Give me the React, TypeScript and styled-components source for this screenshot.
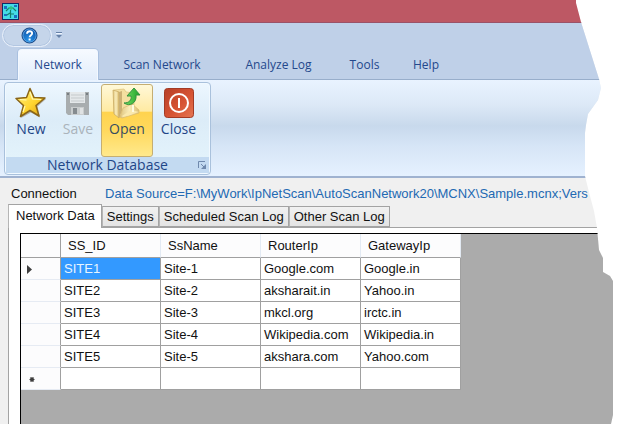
import React, { useState } from "react";
import styled, { createGlobalStyle, css } from "styled-components";

const GlobalStyle = createGlobalStyle`
  * { box-sizing: border-box; }
  html, body, #root { height: 100%; }
  body { margin: 0; background: #fff; overflow: hidden; }
  button { font: inherit; color: inherit; margin: 0; padding: 0; border: 0; background: none; }
`;

/* The right side of the window ends in a ragged, torn-paper edge. */
const tornEdge: Array<[number, number]> = [
  [60, 0], [60, 3], [55, 22], [37, 79], [35, 88], [38, 100], [48, 114],
  [50, 125], [51, 133], [51, 176], [46, 196], [42, 211], [39, 228],
  [37, 250], [33, 258], [33, 272], [26, 276], [23, 281], [23, 415], [25, 424],
];
const tornPolygon = tornEdge
  .map(([right, y]) => `calc(100% - ${right}px) ${y}px`)
  .join(", ");

const Window = styled.main`
  display: flex;
  flex-direction: column;
  min-height: 100%;
  background: #f0f0f0;
  font-family: "Liberation Sans", Arial, sans-serif;
  font-size: 13px;
  line-height: 16px;
  color: #111;
  clip-path: polygon(0 0, ${tornPolygon}, calc(100% - 25px) 100%, 0 100%);
`;

const TitleBar = styled.header`
  display: flex;
  align-items: center;
  height: 23px;
  padding-left: 2px;
  background: #bd5864;
  border-bottom: 1px solid #9a5268;
`;

const QuickAccess = styled.div`
  display: flex;
  align-items: center;
  gap: 2px;
  height: 26px;
  padding: 0 2px 2px;
  background: #bfd0e8;
`;

const HelpPill = styled.button`
  display: grid;
  place-items: center;
  width: 50px;
  height: 23px;
  padding-left: 4px;
  border: 1px solid #eaf1fb;
  border-radius: 12px;
  background: #c5d5ea;
  box-shadow: inset 0 0 0 1px #b3c7e2;
`;

const QuickMenu = styled.button`
  display: grid;
  place-items: center;
  width: 10px;
  height: 16px;
`;

const RibbonTabs = styled.nav`
  display: grid;
  grid-template-columns: 88px 112px 121px 51px 72px;
  height: 31px;
  padding-left: 18px;
  background: #bfd0e8;
  border-bottom: 1px solid #98aecb;
  font-family: "Open Sans", "Noto Sans", sans-serif;
  font-size: 12px;
  color: #24488c;
`;

const RibbonTab = styled.button<{ $active?: boolean }>`
  height: 31px;
  border: 1px solid transparent;
  border-bottom: 0;
  border-radius: 4px 4px 0 0;
  white-space: nowrap;
  ${({ $active }) =>
    $active &&
    css`
      margin-right: 8px;
      border-color: #f3f8ff;
      background: linear-gradient(#f6faff, #e2edfb);
      box-shadow: 0 0 0 1px #a9c0df;
      clip-path: inset(-1px -1px 0 -1px);
    `}
`;

const Ribbon = styled.section`
  display: flex;
  height: 98px;
  padding: 2px 4px 1px;
  border-bottom: 2px solid #9fb2d0;
  background: linear-gradient(#e9f3ff 0, #dde9f7 24px, #c8d9ec 46px, #d6e5f6 66px, #e5f1ff 100%);
`;

const RibbonGroup = styled.div`
  display: flex;
  flex-direction: column;
  width: 207px;
  border: 1px solid #a9c1dc;
  border-radius: 4px;
  background: linear-gradient(#edf7ff, #dcecf8 40%, #e5f5fc);
  box-shadow: inset 0 0 0 1px #f1f9ff;
  font-family: "Open Sans", "Noto Sans", sans-serif;
  font-size: 14px;
  color: #1f4687;
`;

const Commands = styled.div`
  display: grid;
  grid-template-columns: 48px 46px 52px 51px;
  height: 74px;
  padding: 1px 2px 0;
`;

const Command = styled.button<{ $hot?: boolean }>`
  display: flex;
  flex-direction: column;
  align-items: center;
  padding-top: 2px;
  border: 1px solid transparent;
  border-radius: 3px;
  line-height: 20px;
  &:disabled { color: #aab3bb; }
  ${({ $hot }) =>
    $hot &&
    css`
      border-color: #c5ae72;
      background: linear-gradient(#fff8d8 0, #ffeaa2 37%, #ffd34e 38%, #ffd95e 65%, #ffe98c);
      color: #364c60;
    `}
`;

const GroupFooter = styled.div`
  display: grid;
  grid-template-columns: 1fr 14px;
  align-items: center;
  flex: 1;
  margin: 0 1px 1px;
  padding-left: 14px;
  background: #c3daf1;
  line-height: 16px;
  text-align: center;
`;

const ConnectionRow = styled.dl`
  display: grid;
  grid-template-columns: 94px 1fr;
  margin: 0;
  padding: 8px 0 0 11px;
  height: 26px;
  white-space: nowrap;
  dt, dd { margin: 0; }
  dd { color: #2269b3; overflow: hidden; }
`;

const PageTabs = styled.nav`
  display: flex;
  align-items: flex-end;
  height: 23px;
  padding-left: 8px;
`;

const PageTab = styled.button<{ $active?: boolean }>`
  height: 21px;
  padding: 0 4px;
  border: 1px solid #a3a3a3;
  border-left-color: #b5b5b5;
  background: linear-gradient(#f1f1f1, #e4e4e4);
  white-space: nowrap;
  ${({ $active }) =>
    $active &&
    css`
      height: 24px;
      padding: 0 6px 2px 7px;
      margin-bottom: -1px;
      border-bottom: 0;
      background: #fff;
      z-index: 1;
    `}
`;

const TabPanel = styled.section`
  display: flex;
  flex: 1;
  margin-left: 8px;
  padding: 5px 0 0 11px;
  border: 1px solid #a3a3a3;
  border-width: 1px 0 0 1px;
  background: #fff;
`;

const GridArea = styled.div`
  flex: 1;
  border: 1px solid #000;
  border-width: 1px 0 0 1px;
  background: #ababab;
`;

const DataGrid = styled.table`
  width: 440px;
  table-layout: fixed;
  border-collapse: separate;
  border-spacing: 0;
  text-align: left;
  white-space: nowrap;
`;

const HeadCell = styled.th<{ $marker?: boolean }>`
  width: ${({ $marker }) => ($marker ? "40px" : "100px")};
  height: 24px;
  padding: 0 0 0 7px;
  border-right: 1px solid ${({ $marker }) => ($marker ? "#a0a0a0" : "#e3eaf3")};
  border-bottom: 1px solid #a0a0a0;
  background: #fcfcfd;
  font-weight: normal;
`;

const MarkerCell = styled.th`
  height: 22px;
  padding: 0 0 0 6px;
  border-right: 1px solid #a0a0a0;
  border-bottom: 1px solid #e6ebf3;
  background: #fcfcfd;
  svg { display: block; }
`;

const Cell = styled.td<{ $selected?: boolean }>`
  height: 22px;
  padding: 0 0 0 3px;
  border: 1px solid #a0a0a0;
  border-width: 0 1px 1px 0;
  background: ${({ $selected }) => ($selected ? "#3399ff" : "#fff")};
  color: ${({ $selected }) => ($selected ? "#e8f5ff" : "#111")};
`;

const AppIcon = () => (
  <svg width="17" height="17" viewBox="0 0 17 17" aria-hidden="true">
    <rect x=".5" y=".5" width="16" height="16" fill="#45dbe6" stroke="#102a66" />
    <path d="M2 3h3v3H2zM12 2h3v2h-3zM2 11h3v2H2zM12 12h3v3h-3z" fill="#1c6fc0" />
    <path d="M8.5 15V7M4 8l3-3h4l3 3M5 12l3-2M9 11h3" fill="none" stroke="#14806a" strokeWidth="1.2" />
    <path d="M6 5l3-2 3 2-3 2z" fill="#2cc486" />
  </svg>
);

const HelpIcon = () => (
  <svg width="17" height="17" viewBox="0 0 17 17" aria-hidden="true">
    <defs>
      <radialGradient id="help" cx=".45" cy=".8" r=".8">
        <stop stopColor="#2491e7" /><stop offset="1" stopColor="#1051a5" />
      </radialGradient>
    </defs>
    <circle cx="8.5" cy="8.5" r="7.5" fill="url(#help)" stroke="#154380" />
    <circle cx="8.5" cy="8.5" r="6.5" fill="none" stroke="#6aafe9" strokeWidth=".7" />
    <path d="M6 6.7C6.2 3.4 11.4 3.5 11.1 6.5C11 8.2 8.6 8.2 8.6 10.3" fill="none" stroke="#fff" strokeWidth="1.9" />
    <path d="M7.6 11.5h2v2h-2z" fill="#fff" />
  </svg>
);

const MenuArrow = () => (
  <svg width="6" height="8" viewBox="0 0 6 8" aria-hidden="true">
    <path d="M0 1.5h6" stroke="#6681a8" />
    <path d="M0 2.5h6" stroke="#eef5ff" />
    <path d="M0 4h6L3 7z" fill="#6681a8" />
  </svg>
);

const StarIcon = () => (
  <svg width="32" height="32" viewBox="0 0 32 32" aria-hidden="true">
    <defs>
      <linearGradient id="star" x2="1" y2="1">
        <stop stopColor="#fff48a" /><stop offset=".55" stopColor="#ffd52f" /><stop offset="1" stopColor="#d89b13" />
      </linearGradient>
    </defs>
    <path d="M15.5 2.5L20 11L31 12L22.5 19.5L25 30.5L16 25.5L6 31L9 20L1.5 12L12 11Z" fill="#746956" opacity=".45" />
    <path d="M15 1.5L19 10.5L30 11L21 18.5L24 29L15 23.5L5.5 29.5L8.5 18.5L1 11.5L11.5 10.5Z" fill="url(#star)" stroke="#8a6518" strokeWidth="1.5" strokeLinejoin="round" />
    <path d="M15 5L17.5 12L26 12.5M11.5 13L5 12.5M10 19L8 25" fill="none" stroke="#fff9b7" strokeWidth="1.2" />
  </svg>
);

const DiskIcon = () => (
  <svg width="32" height="32" viewBox="0 0 32 32" aria-hidden="true">
    <path d="M4 5h23v23H6l-2-2z" fill="#a8adaf" />
    <path d="M8 5h15v11H8z" fill="#e4e8ea" />
    <path d="M9 8h13M9 11h13M9 14h13" stroke="#c5cacc" />
    <path d="M5 6h2v2H5zM24 6h2v2h-2z" fill="#777e82" />
    <path d="M9 20h13v8H9z" fill="#c9cdce" />
    <path d="M11 21h4v6h-4z" fill="#858b8f" />
    <path d="M18 21h3v6h-3z" fill="#dfe2e3" />
  </svg>
);

const FolderIcon = () => (
  <svg width="32" height="32" viewBox="0 0 32 32" aria-hidden="true">
    <defs>
      <linearGradient id="folder" x2="1">
        <stop stopColor="#dfc57f" /><stop offset=".5" stopColor="#faedba" /><stop offset="1" stopColor="#dabc70" />
      </linearGradient>
      <linearGradient id="arrow" x2="1">
        <stop stopColor="#76df62" /><stop offset="1" stopColor="#20a12b" />
      </linearGradient>
    </defs>
    <path d="M3 3l10-1 2 3 8 1v15l-14 9-6-4z" fill="#f4dfa0" stroke="#dbc17b" strokeWidth=".7" />
    <path d="M2 3l6 2v26l-5-4z" fill="url(#folder)" stroke="#c8a95f" strokeWidth=".7" />
    <path d="M8 5l3-1v20l-3 7z" fill="#cbb074" />
    <path d="M9 30l3-9 9-4 7 6v3l-17 5z" fill="url(#folder)" stroke="#dabb70" strokeWidth=".7" />
    <path d="M11 29l9-6 8 2-16 5z" fill="#fae9ae" />
    <path d="M22 18v7" stroke="#fffbe0" strokeWidth="2" />
    <path d="M13 16c5 0 8-3 7-7h-4l7-8 6 7h-4c1 8-6 12-12 8z" fill="url(#arrow)" stroke="#359341" />
  </svg>
);

const PowerIcon = () => (
  <svg width="32" height="32" viewBox="0 0 32 32" aria-hidden="true">
    <defs>
      <linearGradient id="power" x2="1" y2="1">
        <stop stopColor="#b64029" /><stop offset=".55" stopColor="#d65333" /><stop offset="1" stopColor="#e57753" />
      </linearGradient>
    </defs>
    <rect x="1.5" y="1.5" width="29" height="29" rx="3" fill="url(#power)" stroke="#a33b25" />
    <circle cx="16" cy="16" r="9" fill="none" stroke="#fff" strokeWidth="2" />
    <path d="M16 11v10" stroke="#fff" strokeWidth="2" />
  </svg>
);

const LauncherIcon = () => (
  <svg width="9" height="9" viewBox="0 0 9 9" aria-hidden="true">
    <path d="M.5 7V.5H7" fill="none" stroke="#6f89ad" />
    <path d="M3 3l3 3" stroke="#6f89ad" />
    <path d="M8 3v5H3z" fill="#6f89ad" />
  </svg>
);

const CurrentRowIcon = () => (
  <svg width="10" height="12" viewBox="0 0 10 12" role="img" aria-label="Current row">
    <path d="M0 2l5 4.5L0 11z" fill="#3d3d3d" />
  </svg>
);

const NewRowIcon = () => (
  <svg width="10" height="12" viewBox="0 0 10 12" role="img" aria-label="New row">
    <path d="M5 4v5M2.5 6.5h5M3.2 4.7l3.6 3.6M6.8 4.7L3.2 8.3" stroke="#3d3d3d" strokeWidth="1.2" />
  </svg>
);

const ribbonTabs = ["Network", "Scan Network", "Analyze Log", "Tools", "Help"];
const pageTabs = ["Network Data", "Settings", "Scheduled Scan Log", "Other Scan Log"];
const columns = ["SS_ID", "SsName", "RouterIp", "GatewayIp"];
const sites = [
  ["SITE1", "Site-1", "Google.com", "Google.in"],
  ["SITE2", "Site-2", "aksharait.in", "Yahoo.in"],
  ["SITE3", "Site-3", "mkcl.org", "irctc.in"],
  ["SITE4", "Site-4", "Wikipedia.com", "Wikipedia.in"],
  ["SITE5", "Site-5", "akshara.com", "Yahoo.com"],
  ["", "", "", ""],
];

export default function App() {
  const [ribbonTab, setRibbonTab] = useState(0);
  const [pageTab, setPageTab] = useState(0);

  return (
    <>
      <GlobalStyle />
      <Window>
        <TitleBar><AppIcon /></TitleBar>
        <QuickAccess>
          <HelpPill aria-label="Help"><HelpIcon /></HelpPill>
          <QuickMenu aria-label="Customize toolbar"><MenuArrow /></QuickMenu>
        </QuickAccess>
        <RibbonTabs>
          {ribbonTabs.map((name, i) => (
            <RibbonTab key={name} $active={i === ribbonTab} onClick={() => setRibbonTab(i)}>{name}</RibbonTab>
          ))}
        </RibbonTabs>
        <Ribbon>
          <RibbonGroup>
            <Commands>
              <Command><StarIcon />New</Command>
              <Command disabled><DiskIcon />Save</Command>
              <Command $hot><FolderIcon />Open</Command>
              <Command><PowerIcon />Close</Command>
            </Commands>
            <GroupFooter>
              <span>Network Database</span>
              <button aria-label="Network Database options"><LauncherIcon /></button>
            </GroupFooter>
          </RibbonGroup>
        </Ribbon>
        <ConnectionRow>
          <dt>Connection</dt>
          <dd>Data Source=F:\MyWork\IpNetScan\AutoScanNetwork20\MCNX\Sample.mcnx;Vers</dd>
        </ConnectionRow>
        <PageTabs>
          {pageTabs.map((name, i) => (
            <PageTab key={name} $active={i === pageTab} onClick={() => setPageTab(i)}>{name}</PageTab>
          ))}
        </PageTabs>
        <TabPanel>
          <GridArea>
            <DataGrid>
              <thead>
                <tr>
                  <HeadCell $marker />
                  {columns.map((name) => <HeadCell key={name} scope="col">{name}</HeadCell>)}
                </tr>
              </thead>
              <tbody>
                {sites.map((row, r) => (
                  <tr key={r}>
                    <MarkerCell scope="row">
                      {r === 0 && <CurrentRowIcon />}
                      {r === sites.length - 1 && <NewRowIcon />}
                    </MarkerCell>
                    {row.map((value, c) => (
                      <Cell key={c} $selected={r === 0 && c === 0}>{value}</Cell>
                    ))}
                  </tr>
                ))}
              </tbody>
            </DataGrid>
          </GridArea>
        </TabPanel>
      </Window>
    </>
  );
}
